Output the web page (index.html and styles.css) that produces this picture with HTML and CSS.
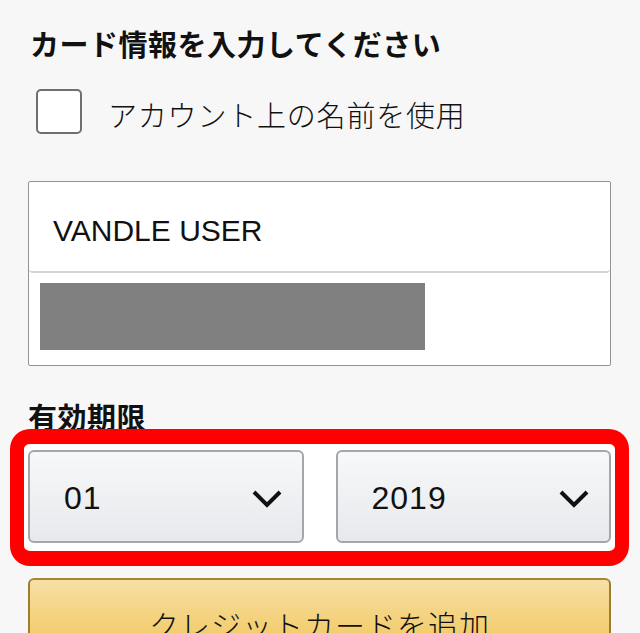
FILE: index.html
```html
<!DOCTYPE html>
<html lang="ja">
<head>
<meta charset="utf-8">
<link rel="stylesheet" href="styles.css">
</head>
<body>
<div class="page">
  <h1 class="title">カード情報を入力してください</h1>
  <label class="check-row">
    <span class="checkbox"></span>
    <span class="check-label">アカウント上の名前を使用</span>
  </label>
  <div class="fields">
    <div class="field field-name">VANDLE USER</div>
    <div class="field field-number"><span class="masked"></span></div>
  </div>
  <h2 class="label">有効期限</h2>
  <div class="highlight">
    <div class="select">
      <span class="select-value">01</span>
      <svg class="chevron" width="30" height="18" viewBox="0 0 30 18"><polyline points="2,2 15,15 28,2" fill="none" stroke="#111" stroke-width="4"/></svg>
    </div>
    <div class="select">
      <span class="select-value">2019</span>
      <svg class="chevron" width="30" height="18" viewBox="0 0 30 18"><polyline points="2,2 15,15 28,2" fill="none" stroke="#111" stroke-width="4"/></svg>
    </div>
  </div>
  <div class="button">クレジットカードを追加</div>
</div>
</body>
</html>
```

FILE: styles.css
```css
html, body {
  margin: 0;
  padding: 0;
  background: #f7f7f7;
  overflow: hidden;
}
body {
  font-family: "Liberation Sans", "Noto Sans CJK JP", sans-serif;
  color: #111;
}
.page {
  padding: 25px 29px 0 28px;
  display: flex;
  flex-direction: column;
}
.title {
  margin: 0;
  font-family: "Noto Sans CJK JP", sans-serif;
  font-size: 29px;
  font-weight: 700;
  line-height: 36px;
  letter-spacing: 0.5px;
  padding-left: 2px;
}
.check-row {
  display: flex;
  align-items: center;
  margin-top: 28px;
  padding-left: 8px;
  gap: 26px;
}
.checkbox {
  width: 42px;
  height: 41px;
  border: 2px solid #6f6f6f;
  border-radius: 5px;
  background: #fff;
  flex: none;
}
.check-label {
  font-family: "Noto Sans CJK JP", sans-serif;
  font-size: 29px;
  letter-spacing: 0.8px;
  line-height: 36px;
  font-weight: 300;
  padding-top: 4px;
}
.fields {
  margin-top: 47px;
  border: 1px solid #939393;
  background: #fff;
  border-radius: 2px;
}
.field {
  display: flex;
  align-items: center;
}
.field-name {
  border-bottom: 2px solid #d4d4d4;
  border-radius: 0 0 4px 4px;
  padding-left: 24px;
  font-size: 30px;
  font-weight: 400;
  padding-top: 8px;
  box-sizing: border-box;
  height: 91px;
}
.field-number {
  height: 92px;
  padding-left: 11px;
  align-items: flex-start;
  padding-top: 10px;
  box-sizing: border-box;
}
.masked {
  display: block;
  width: 385px;
  height: 67px;
  background: #808080;
}
.label {
  margin: 32px 0 0 0;
  font-family: "Noto Sans CJK JP", sans-serif;
  font-size: 29px;
  font-weight: 700;
  line-height: 36px;
  letter-spacing: 0.5px;
}
.highlight {
  margin: -5px -18px 0 -18px;
  border-style: solid;
  border-color: #ff0000;
  border-width: 15px 14px 15px 14px;
  border-radius: 20px;
  background: #fff;
  padding: 6px 4px 8px 4px;
  display: flex;
  gap: 32px;
}
.select {
  flex: 1;
  height: 93px;
  box-sizing: border-box;
  border: 2px solid #a3a6aa;
  border-radius: 6px;
  background: linear-gradient(#f7f8fa, #e7e9ec);
  display: flex;
  align-items: center;
  justify-content: space-between;
  padding: 4px 20px 0 34px;
}
.select-value {
  font-size: 32px;
  letter-spacing: 1px;
}
.chevron {
  display: block;
}
.button {
  margin-top: 12px;
  height: 92px;
  box-sizing: border-box;
  border: 2px solid #a88734;
  border-color: #a88734 #9c7e31 #846a29;
  border-radius: 6px;
  background: linear-gradient(#f7dfa5, #f0c14b);
  display: flex;
  align-items: center;
  justify-content: center;
  font-family: "Noto Sans CJK JP", sans-serif;
  font-size: 30px;
  font-weight: 300;
  letter-spacing: 1px;
  color: #111;
}
```
